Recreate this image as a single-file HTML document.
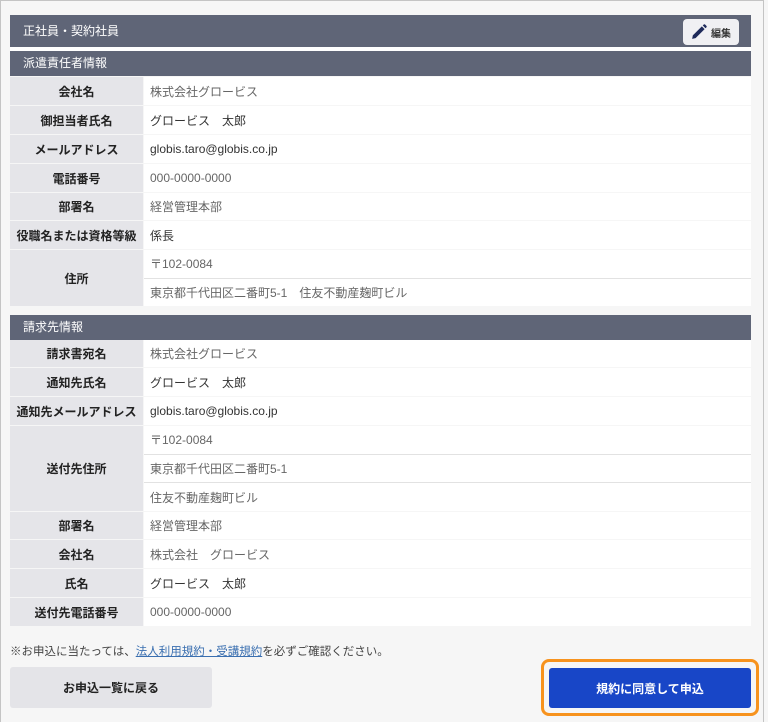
<!DOCTYPE html>
<html><head><meta charset="utf-8"><style>
*{box-sizing:border-box;margin:0;padding:0}
body{width:768px;height:722px;background:#f6f6f6;font-family:"Liberation Sans","Noto Sans CJK JP",sans-serif;font-size:12px;color:#333;position:relative;overflow:hidden}
.frame{position:absolute;left:0;top:0;width:764px;height:722px;border:1px solid #c4c4c4;border-bottom:none}
.hd{position:absolute;left:10px;width:741px;background:#5f6577;color:#fff;font-size:12px;padding-left:13px}
.row{position:absolute;left:10px;width:741px;display:flex}
.lab{width:133px;background:#e5e5e9;font-weight:bold;display:flex;align-items:center;justify-content:center;color:#222;font-size:12px}
.vals{flex:1;margin-left:1px;display:flex;flex-direction:column}
.v{flex:1;background:#fff;display:flex;align-items:center;padding-left:6px;color:#666}
.v+.v{border-top:1px solid #e2e2e2}
.d{color:#333}
.btn{position:absolute;display:flex;align-items:center;justify-content:center;font-weight:bold;border-radius:3px}
</style></head><body>
<div class="frame"></div>
<div class="hd" style="top:15px;height:32px;line-height:32px">正社員・契約社員</div>
<div style="position:absolute;left:10px;top:47px;width:741px;height:4px;background:#fff"></div>
<div style="position:absolute;left:683px;top:19px;width:56px;height:26px;background:#f0f0f3;border-radius:4px;display:flex;align-items:center;justify-content:center;font-size:10px;font-weight:bold;color:#333">
<svg width="16" height="16" viewBox="0 0 14 14" style="margin-right:4px"><path d="M1 13 L1.6 10 L9.5 2.1 L11.9 4.5 L4 12.4 Z" fill="#1e2a5a"/><path d="M10.3 1.3 L11.3 0.3 Q11.8 0 12.3 0.4 L13.6 1.7 Q14 2.2 13.6 2.7 L12.7 3.7 Z" fill="#1e2a5a"/></svg>編集</div>
<div class="hd" style="top:51px;height:25px;line-height:25px">派遣責任者情報</div>

<div class="row" style="top:77px;height:28px"><div class="lab">会社名</div><div class="vals"><div class="v">株式会社グロービス</div></div></div>
<div class="row" style="top:106px;height:28px"><div class="lab">御担当者氏名</div><div class="vals"><div class="v d">グロービス　太郎</div></div></div>
<div class="row" style="top:135px;height:28px"><div class="lab">メールアドレス</div><div class="vals"><div class="v d">globis.taro@globis.co.jp</div></div></div>
<div class="row" style="top:164px;height:28px"><div class="lab">電話番号</div><div class="vals"><div class="v">000-0000-0000</div></div></div>
<div class="row" style="top:193px;height:27px"><div class="lab">部署名</div><div class="vals"><div class="v">経営管理本部</div></div></div>
<div class="row" style="top:221px;height:28px"><div class="lab">役職名または資格等級</div><div class="vals"><div class="v d">係長</div></div></div>
<div class="row" style="top:250px;height:56px"><div class="lab">住所</div><div class="vals"><div class="v">〒102-0084</div><div class="v">東京都千代田区二番町5-1　住友不動産麹町ビル</div></div></div>

<div class="hd" style="top:315px;height:25px;line-height:25px">請求先情報</div>
<div class="row" style="top:340px;height:27px"><div class="lab">請求書宛名</div><div class="vals"><div class="v">株式会社グロービス</div></div></div>
<div class="row" style="top:368px;height:28px"><div class="lab">通知先氏名</div><div class="vals"><div class="v d">グロービス　太郎</div></div></div>
<div class="row" style="top:397px;height:28px"><div class="lab">通知先メールアドレス</div><div class="vals"><div class="v d">globis.taro@globis.co.jp</div></div></div>
<div class="row" style="top:426px;height:85px"><div class="lab">送付先住所</div><div class="vals"><div class="v">〒102-0084</div><div class="v">東京都千代田区二番町5-1</div><div class="v">住友不動産麹町ビル</div></div></div>
<div class="row" style="top:512px;height:27px"><div class="lab">部署名</div><div class="vals"><div class="v">経営管理本部</div></div></div>
<div class="row" style="top:540px;height:28px"><div class="lab">会社名</div><div class="vals"><div class="v">株式会社　グロービス</div></div></div>
<div class="row" style="top:569px;height:28px"><div class="lab">氏名</div><div class="vals"><div class="v d">グロービス　太郎</div></div></div>
<div class="row" style="top:598px;height:28px"><div class="lab">送付先電話番号</div><div class="vals"><div class="v">000-0000-0000</div></div></div>

<div style="position:absolute;left:10px;top:643px;font-size:11.5px;color:#444">※お申込に当たっては、<span style="color:#3a6fb0;text-decoration:underline">法人利用規約・受講規約</span>を必ずご確認ください。</div>
<div class="btn" style="left:10px;top:667px;width:202px;height:41px;background:#e4e4e8;color:#222">お申込一覧に戻る</div>
<div style="position:absolute;left:541px;top:659px;width:218px;height:57px;border:3px solid #f7931e;border-radius:8px"></div>
<div class="btn" style="left:549px;top:668px;width:202px;height:40px;background:#1846c7;color:#fff">規約に同意して申込</div>
</body></html>
